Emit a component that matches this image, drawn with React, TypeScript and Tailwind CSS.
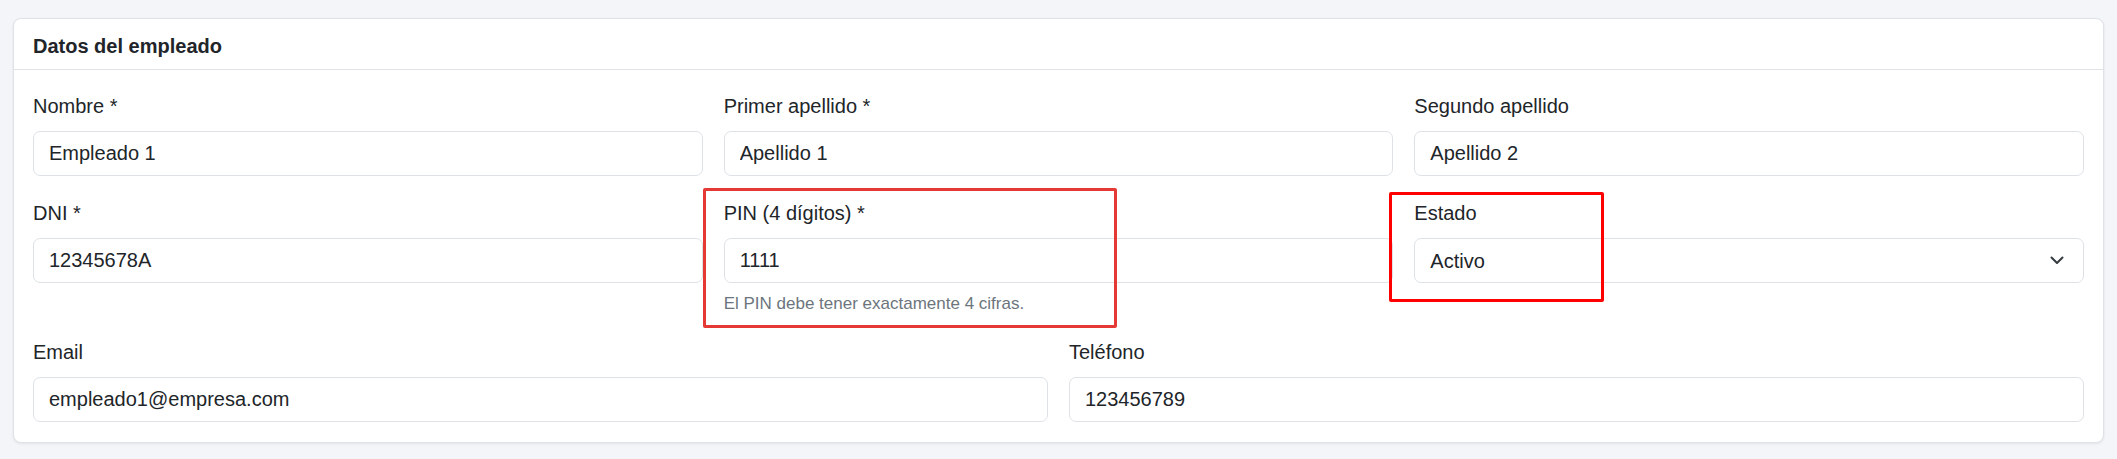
import React from 'react';

interface FieldProps {
  label: string;
  value: string;
  help?: string;
}

const Field: React.FC<FieldProps> = ({ label, value, help }) => {
  return (
    <div className="flex flex-col">
      <label className="mb-[10px] text-[20px] leading-[30px] text-[#212529]">{label}</label>
      <input
        readOnly
        value={value}
        className="h-[45px] w-full rounded-[7px] border border-[#dee2e6] bg-white px-[15px] text-[20px] text-[#212529] outline-none"
      />
      {help && <p className="mt-[8px] text-[17px] leading-[25px] text-[#6c757d]">{help}</p>}
    </div>
  );
};

const SelectField: React.FC<{ label: string; value: string }> = ({ label, value }) => {
  return (
    <div className="flex flex-col">
      <label className="mb-[10px] text-[20px] leading-[30px] text-[#212529]">{label}</label>
      <div className="flex h-[45px] w-full items-center justify-between rounded-[7px] border border-[#dee2e6] bg-white pl-[15px] pr-[19px] text-[20px] text-[#212529]">
        <span>{value}</span>
        <svg width="14" height="9" viewBox="0 0 14 9" fill="none" stroke="#343a40" strokeWidth="2" strokeLinecap="round" strokeLinejoin="round">
          <path d="M1.5 1.5 7 7l5.5-5.5" />
        </svg>
      </div>
    </div>
  );
};

export default function App() {
  return (
    <div className="min-h-[459px] bg-[#f3f5f8] px-[13px] py-[18px] font-['Liberation_Sans',Arial,sans-serif]">
      <div className="rounded-[8px] border border-[#dfe2e6] bg-white shadow-[0_1px_3px_rgba(0,0,0,0.08)]">
        <div className="border-b border-[#dfe2e6] px-[19px] pb-[8px] pt-[12px]">
          <h2 className="text-[20px] font-bold leading-[30px] text-[#212529]">Datos del empleado</h2>
        </div>
        <div className="px-[19px] pb-[20px] pt-[21px]">
          <div className="grid grid-cols-3 gap-x-[21px]">
            <Field label="Nombre *" value="Empleado 1" />
            <Field label="Primer apellido *" value="Apellido 1" />
            <Field label="Segundo apellido" value="Apellido 2" />
          </div>
          <div className="mt-[22px] grid grid-cols-3 items-start gap-x-[21px]">
            <Field label="DNI *" value="12345678A" />
            <div className="relative">
              <Field label="PIN (4 dígitos) *" value="1111" help="El PIN debe tener exactamente 4 cifras." />
              <div className="pointer-events-none absolute left-[-21px] top-[-10px] h-[140px] w-[414px] rounded-[2px] border-[3px] border-[#e53935]" />
            </div>
            <div className="relative">
              <SelectField label="Estado" value="Activo" />
              <div className="pointer-events-none absolute left-[-25px] top-[-6px] h-[110px] w-[215px] rounded-[2px] border-[3px] border-[#ff0000]" />
            </div>
          </div>
          <div className="mt-[21px] grid grid-cols-2 gap-x-[21px]">
            <Field label="Email" value="empleado1@empresa.com" />
            <Field label="Teléfono" value="123456789" />
          </div>
        </div>
      </div>
    </div>
  );
}
